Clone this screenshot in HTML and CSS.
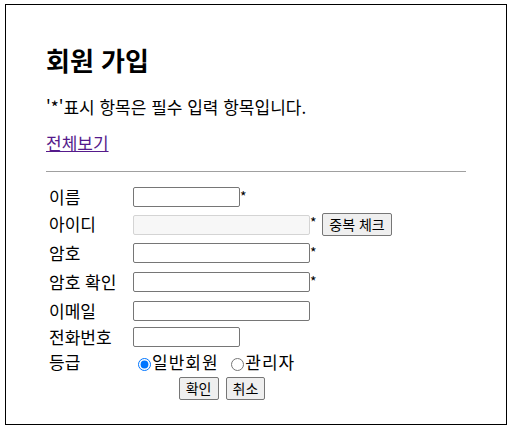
FILE: index.html
```html
<!DOCTYPE html>
<html lang="ko">
<head>
  <meta charset="UTF-8">
  <meta name="viewport" content="width=device-width, initial-scale=1.0">
  <title>회원 가입</title>
  <link rel="stylesheet" href="styles.css">
</head>
<body>
  <div class="wrap">
    <h2>회원 가입</h2>
    <p class="notice">'*'표시 항목은 필수 입력 항목입니다.</p>
    <p class="more"><a href="#">전체보기</a></p>
    <hr>
    <form id="joinForm">
      <table class="join">
        <tr class="r1">
          <td class="lbl">이름</td>
          <td><input type="text" name="name" class="short"><span class="req">*</span></td>
        </tr>
        <tr class="r2">
          <td class="lbl">아이디</td>
          <td><input type="text" name="id" class="long" disabled><span class="req">*</span> <button type="button">중복 체크</button></td>
        </tr>
        <tr class="r3">
          <td class="lbl">암호</td>
          <td><input type="password" name="pwd" class="long"><span class="req">*</span></td>
        </tr>
        <tr class="r4">
          <td class="lbl">암호 확인</td>
          <td><input type="password" name="pwd_check" class="long"><span class="req">*</span></td>
        </tr>
        <tr class="r5">
          <td class="lbl">이메일</td>
          <td><input type="text" name="email" class="long"></td>
        </tr>
        <tr class="r6">
          <td class="lbl">전화번호</td>
          <td><input type="text" name="phone" class="short"></td>
        </tr>
        <tr class="r7">
          <td class="lbl">등급</td>
          <td>
            <label><input type="radio" name="admin" value="0" checked>일반회원</label>
            <label class="second"><input type="radio" name="admin" value="1">관리자</label>
          </td>
        </tr>
        <tr class="r8">
          <td colspan="2">
            <div class="actions">
              <button type="submit">확인</button>
              <button type="reset">취소</button>
            </div>
          </td>
        </tr>
      </table>
    </form>
  </div>
</body>
</html>
```

FILE: styles.css
```css
* { font-family: "Noto Sans CJK KR", "Noto Sans", sans-serif; }
body { margin: 0; background: #fff; color: #000; font-size: 17px; }
.wrap { box-sizing: border-box; width: 502px; height: 421px; margin: 4px 0 0 5px; border: 1px solid #000; padding: 39px 40px 0; }
h2 { margin: 0; font-size: 26px; line-height: 32px; font-weight: bold; }
p { margin: 0; line-height: 20px; }
.notice { margin-top: 21px; }
.more { margin-top: 16px; }
.more a { color: #551a8b; }
hr { margin: 18px 0 0; border: 0; border-top: 1px solid #a0a0a0; height: 0; }
.join { margin-top: 10px; width: 352px; border-spacing: 2px; table-layout: fixed; }
.join td { padding: 1px; vertical-align: middle; line-height: 18px; }
.join td.lbl { width: 80px; }
.r1 { height: 25px; }
.r2 { height: 26px; }
.r3 { height: 27px; }
.r4 { height: 27px; }
.r5 { height: 27px; }
.r6 { height: 22px; }
.r7 { height: 24px; }
.r8 { height: 25px; }
.req { font-size: 14px; vertical-align: 3px; }
input[type="text"], input[type="password"] {
  box-sizing: border-box; height: 20px; margin: 0; padding: 1px 2px; font-size: 13.33px;
  border: 1px solid #767676; border-radius: 2px; background: #fff; vertical-align: top;
}
input.short { width: 107px; }
input.long { width: 177px; }
input:disabled { background: #f7f7f7; border-color: #d4d4d4; }
button {
  box-sizing: border-box; height: 23px; padding: 0 6px; margin: 0; font-size: 14px; line-height: 19px;
  background: #efefef; color: #000; border: 1px solid #767676; border-radius: 2px; vertical-align: top;
}
.r2 input { margin-top: 2px; }
.r2 button { margin-left: 1px; }
.r7 label { letter-spacing: 1px; }
input[type="radio"] { width: 13px; height: 13px; margin: 0 1px 0 5px; vertical-align: middle; accent-color: #0075ff; }
label.second { margin-left: 3px; }
.actions { display: flex; justify-content: center; gap: 7px; }
```
